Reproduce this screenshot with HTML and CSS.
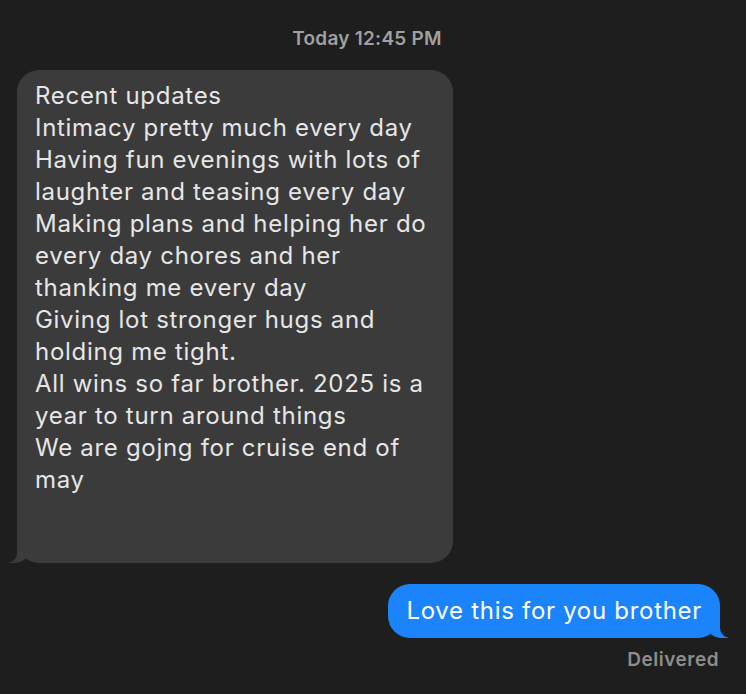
FILE: index.html
```html
<!DOCTYPE html>
<html lang="en">

<head>
    <meta charset="UTF-8">
    <meta name="viewport" content="width=device-width, initial-scale=1.0">
    <title>Messages</title>
    <link rel="stylesheet" href="styles.css">
</head>

<body>

    <div class="chat">
        <div class="stamp"><span class="day">Today</span> 12:45 PM</div>

        <div class="row row-in">
            <div class="bubble in">Recent updates<br>Intimacy pretty much every day<br>Having fun evenings with lots of<br>laughter and teasing every day<br>Making plans and helping her do<br>every day chores and her<br>thanking me every day<br>Giving lot stronger hugs and<br>holding me tight.<br>All wins so far brother. 2025 is a<br>year to turn around things<br>We are gojng for cruise end of<br>may</div>
        </div>

        <div class="row row-out">
            <div class="bubble out">Love this for you brother</div>
        </div>

        <div class="status">Delivered</div>
    </div>

</body>

</html>
```

FILE: styles.css
```css
body {
    margin: 0;
    background-color: #1e1e1e;
    font-family: Inter, "Liberation Sans", sans-serif;
    height: 100vh;
}

.chat {
    display: flex;
    flex-direction: column;
    padding: 28px 26px 0 17px;
}

.stamp {
    text-align: center;
    font-size: 19px;
    line-height: 22px;
    font-weight: 600;
    letter-spacing: 0.25px;
    color: #a0a0a0;
    padding-right: 3px;
}

.stamp .day {
    font-weight: 600;
}

.row {
    display: flex;
}

.row-in {
    margin-top: 20px;
    justify-content: flex-start;
}

.row-out {
    margin-top: 21px;
    justify-content: flex-end;
}

.bubble {
    position: relative;
    font-size: 24px;
    line-height: 32px;
    letter-spacing: 0.7px;
    border-radius: 22px;
    box-sizing: border-box;
}

.bubble.in {
    width: 436px;
    padding: 10px 18px 67px 18px;
    background-color: #3b3b3b;
    color: #e6e6e6;
}

.bubble.out {
    padding: 11px 18px;
    background-color: #1b84fb;
    color: #ffffff;
}

/* tails */
.bubble::before,
.bubble::after {
    content: "";
    position: absolute;
    bottom: 0;
    height: 22px;
}

.bubble.in::before {
    left: -9px;
    width: 22px;
    background-color: #3b3b3b;
    border-bottom-right-radius: 16px 14px;
}

.bubble.in::after {
    left: -26px;
    width: 26px;
    background-color: #1e1e1e;
    border-bottom-right-radius: 10px;
}

.bubble.out::before {
    right: -8px;
    width: 22px;
    background-color: #1b84fb;
    border-bottom-left-radius: 16px 14px;
}

.bubble.out::after {
    right: -26px;
    width: 26px;
    background-color: #1e1e1e;
    border-bottom-left-radius: 10px;
}

.status {
    margin-top: 11px;
    text-align: right;
    font-size: 19px;
    line-height: 22px;
    font-weight: 600;
    letter-spacing: 0.5px;
    color: #8d8d8d;
    padding-right: 1px;
}
```
